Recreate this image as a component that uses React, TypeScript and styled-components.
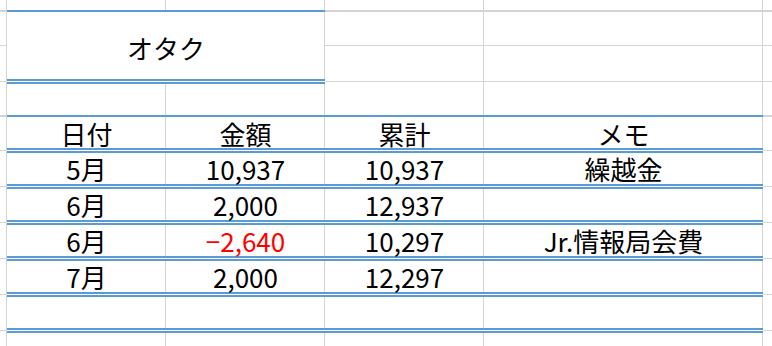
import React from 'react';
import styled, { createGlobalStyle } from 'styled-components';

const BLUE = '#5b9bd5';
const GRID = '#d4d4d4';

type Rule = 'none' | 'grid' | 'grid2' | 'blue2' | 'double';

const GlobalStyle = createGlobalStyle`
  html, body {
    margin: 0;
    padding: 0;
    background: #fff;
  }
  body {
    font-family: 'Noto Sans CJK JP', 'Noto Sans', sans-serif;
  }
`;

// the shadows are stacked, first one on top: blue rules cover the gray gridlines
const rules = (top: Rule, bottom: Rule, right: boolean) => {
  const list: string[] = [];
  if (bottom === 'double') list.push('inset 0 -1px 0 #fff', `inset 0 -3px 0 ${BLUE}`);
  if (bottom === 'blue2') list.push(`inset 0 -2px 0 ${BLUE}`);
  if (top === 'blue2') list.push(`inset 0 2px 0 ${BLUE}`);
  if (bottom === 'grid') list.push(`inset 0 -1px 0 ${GRID}`);
  if (bottom === 'grid2') list.push(`inset 0 -2px 0 ${GRID}`);
  if (right) list.push(`inset -1px 0 0 ${GRID}`);
  return list.length ? list.join(', ') : 'none';
};

const Sheet = styled.div`
  display: grid;
  grid-template-columns: 7px 159px 159px 159px 279px 1fr;
  grid-template-rows: 12px 34px 36px 35px 34px repeat(5, 36px) 1fr;
  width: 772px;
  height: 346px;
  overflow: hidden;
  background: #fff;
`;

interface CellProps {
  $top?: Rule;
  $bottom?: Rule;
  $right?: boolean;
  $span?: number;
  $rows?: number;
  $red?: boolean;
}

const Cell = styled.div<CellProps>`
  grid-column: span ${({ $span }) => $span ?? 1};
  grid-row: span ${({ $rows }) => $rows ?? 1};
  display: flex;
  align-items: center;
  justify-content: center;
  font-size: 26px;
  line-height: 1.3;
  color: ${({ $red }) => ($red ? '#ff0000' : '#000')};
  white-space: nowrap;
  box-shadow: ${({ $top = 'none', $bottom = 'none', $right = false }) => rules($top, $bottom, $right)};
`;

const Title = styled(Cell)`
  padding-top: 2px;
`;

const header = ['日付', '金額', '累計', 'メモ'];

const entries = [
  { date: '5月', amount: '10,937', total: '10,937', memo: '繰越金' },
  { date: '6月', amount: '2,000', total: '12,937', memo: '' },
  { date: '6月', amount: '−2,640', total: '10,297', memo: 'Jr.情報局会費', red: true },
  { date: '7月', amount: '2,000', total: '12,297', memo: '' },
  { date: '', amount: '', total: '', memo: '' },
];

const App = () => (
  <>
    <GlobalStyle />
    <Sheet>
      {/* row cut off at the top */}
      <Cell $bottom="grid2" $right />
      <Cell $bottom="blue2" $right />
      <Cell $bottom="blue2" $right />
      <Cell $bottom="grid2" $right />
      <Cell $bottom="grid2" $right />
      <Cell $bottom="grid2" />

      {/* title, merged over two rows */}
      <Cell $bottom="grid" $right />
      <Title $span={2} $rows={2} $bottom="double" $right>
        オタク
      </Title>
      <Cell $bottom="grid" $right />
      <Cell $bottom="grid" $right />
      <Cell $bottom="grid" />
      <Cell $bottom="grid" $right />
      <Cell $bottom="grid" $right />
      <Cell $bottom="grid" $right />
      <Cell $bottom="grid" />

      {/* blank row */}
      <Cell $bottom="grid2" $right />
      <Cell $top="blue2" $bottom="blue2" $right />
      <Cell $top="blue2" $bottom="blue2" $right />
      <Cell $bottom="blue2" $right />
      <Cell $bottom="blue2" $right />
      <Cell $bottom="grid2" />

      {/* header */}
      <Cell $bottom="grid" $right />
      {header.map((h) => (
        <Cell key={h} $bottom="double" $right>
          {h}
        </Cell>
      ))}
      <Cell $bottom="grid" />

      {entries.map((e, i) => (
        <React.Fragment key={i}>
          <Cell $bottom="grid" $right />
          <Cell $top="blue2" $bottom="double" $right>
            {e.date}
          </Cell>
          <Cell $top="blue2" $bottom="double" $right $red={e.red}>
            {e.amount}
          </Cell>
          <Cell $top="blue2" $bottom="double" $right>
            {e.total}
          </Cell>
          <Cell $top="blue2" $bottom="double" $right>
            {e.memo}
          </Cell>
          <Cell $bottom="grid" />
        </React.Fragment>
      ))}

      {/* last visible row */}
      <Cell $right />
      <Cell $top="blue2" $right />
      <Cell $top="blue2" $right />
      <Cell $top="blue2" $right />
      <Cell $top="blue2" $right />
      <Cell />
    </Sheet>
  </>
);

export default App;
